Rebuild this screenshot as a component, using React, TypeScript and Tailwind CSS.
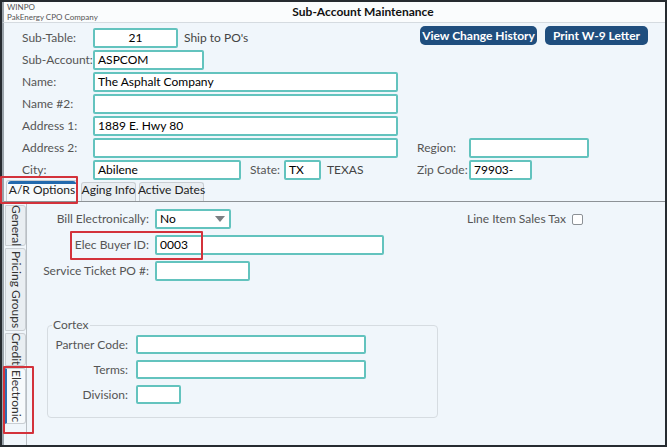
import React from 'react';

const font = "font-['Lato','Noto_Sans',sans-serif]";

const Box = ({ w, value, center, h = 'h-[20px]' }: { w: string; value?: string; center?: boolean; h?: string }) => (
  <div
    className={`${w} ${h} shrink-0 bg-white border-2 border-[#63c3be] rounded-[2px] flex items-center px-[3px] text-[12px] text-black whitespace-nowrap ${center ? 'justify-center' : ''}`}
  >
    {value}
  </div>
);

const Label = ({ children, w = 'w-[71px]' }: { children: React.ReactNode; w?: string }) => (
  <div className={`${w} shrink-0 whitespace-nowrap text-[12px] text-[#555]`}>{children}</div>
);

const TopRow = ({ label, children }: { label: string; children: React.ReactNode }) => (
  <div className="flex items-center h-[20px] mb-[2px]">
    <Label>{label}</Label>
    {children}
  </div>
);

const VTab = ({ label, h, active }: { label: string; h: string; active?: boolean }) => (
  <div
    className={`${h} w-[21px] mb-[2px] flex items-center justify-center border border-[#c9ced3] rounded-r-[3px] text-[12px] text-[#333] ${
      active ? 'bg-[#f7fafc] border-l-2 border-l-[#2b6cb0]' : 'bg-[#e9eef2]'
    }`}
  >
    <span className="[writing-mode:vertical-rl] whitespace-nowrap">{label}</span>
  </div>
);

const HTab = ({ label, w, active }: { label: string; w: string; active?: boolean }) => (
  <div
    className={`${w} relative shrink-0 border border-[#c9ced3] border-b-0 rounded-t-[3px] flex items-end justify-center pb-[2px] whitespace-nowrap text-[12px] text-[#222] ${
      active ? 'h-[21px] bg-[#f7fafc]' : 'h-[19px] bg-[#e9eef2]'
    }`}
  >
    {active && <div className="absolute top-0 left-[1px] right-[1px] h-[3px] bg-[#2369ad] rounded-t-[3px]" />}
    {label}
  </div>
);

export default function App() {
  return (
    <div className={`relative w-[667px] h-[447px] ${font}`}>
      <div className="w-full h-full border-2 border-[#262b30] bg-[#f0f6fb] flex flex-col overflow-hidden">
        {/* header */}
        <div className="h-[21px] shrink-0 flex items-center bg-[#fafcfd] border-b border-[#d5dbe0] border-l-2 border-l-[#9aa3aa]">
          <div className="w-[57px] shrink-0 whitespace-nowrap pl-[3px] text-[8px] leading-[10px] text-[#555]">
            <div>WINPO</div>
            <div>PakEnergy CPO Company</div>
          </div>
          <div className="flex-1 -mt-[1px] text-center text-[12px] font-bold text-[#111] whitespace-nowrap">Sub-Account Maintenance</div>
        </div>

        <div className="flex-1 flex flex-col border-l-2 border-l-[#9aa3aa]">
          {/* header fields */}
          <div className="pl-[18px] pt-[5px] pr-[17px]">
            <TopRow label="Sub-Table:">
              <Box w="w-[85px]" value="21" center />
              <span className="ml-[6px] whitespace-nowrap text-[12px] text-[#444]">Ship to PO's</span>
              <div className="ml-auto self-start -mt-[2px] flex gap-[8px]">
                <button className="h-[19px] w-[117px] whitespace-nowrap rounded-[5px] bg-[#1f4e7e] text-white text-[12px] font-bold">View Change History</button>
                <button className="h-[19px] w-[103px] whitespace-nowrap rounded-[5px] bg-[#1f4e7e] text-white text-[12px] font-bold">Print W-9 Letter</button>
              </div>
            </TopRow>
            <TopRow label="Sub-Account:">
              <Box w="w-[111px]" value="ASPCOM" />
            </TopRow>
            <TopRow label="Name:">
              <Box w="w-[305px]" value="The Asphalt Company" />
            </TopRow>
            <TopRow label="Name #2:">
              <Box w="w-[305px]" />
            </TopRow>
            <TopRow label="Address 1:">
              <Box w="w-[305px]" value="1889 E. Hwy 80" />
            </TopRow>
            <TopRow label="Address 2:">
              <Box w="w-[305px]" />
              <div className="ml-[19px]">
                <Label w="w-[52px]">Region:</Label>
              </div>
              <Box w="w-[120px]" />
            </TopRow>
            <div className="flex items-center h-[20px]">
              <Label>City:</Label>
              <Box w="w-[148px]" value="Abilene" />
              <div className="ml-[9px]">
                <Label w="w-[34px]">State:</Label>
              </div>
              <Box w="w-[37px]" value="TX" />
              <span className="ml-[6px] w-[90px] whitespace-nowrap text-[12px] text-[#444]">TEXAS</span>
              <Label w="w-[52px]">Zip Code:</Label>
              <Box w="w-[63px]" value="79903-" />
            </div>
          </div>

          {/* horizontal tabs */}
          <div className="h-[22px] shrink-0 flex items-end pl-[2px] gap-[3px] border-b border-[#8d9296]">
            <HTab label="A/R Options" w="w-[72px]" active />
            <HTab label="Aging Info" w="w-[55px]" />
            <HTab label="Active Dates" w="w-[65px]" />
          </div>

          {/* body */}
          <div className="flex-1 flex">
            <div className="w-[23px] shrink-0 pt-[3px] pl-[1px] border-r border-[#b9bfc4]">
              <VTab label="General" h="h-[41px]" />
              <VTab label="Pricing Groups" h="h-[83px]" />
              <VTab label="Credit" h="h-[33px]" />
              <VTab label="Electronic" h="h-[56px]" active />
            </div>

            <div className="flex-1 pt-[7px]">
              <div className="flex items-center h-[20px] mb-[6px]">
                <div className="w-[122px] text-right whitespace-nowrap text-[12px] text-[#555]">Bill Electronically:</div>
                <div className="ml-[6px] w-[76px] h-[20px] bg-white border-2 border-[#63c3be] rounded-[2px] flex items-center justify-between px-[3px] text-[12px]">
                  No
                  <svg width="10" height="6" viewBox="0 0 10 6" className="mr-[1px]">
                    <path d="M0 0 H10 L5 6 Z" fill="#7b7f83" />
                  </svg>
                </div>
                <div className="ml-auto mr-[82px] flex items-center gap-[6px] whitespace-nowrap text-[12px] text-[#555]">
                  Line Item Sales Tax
                  <div className="w-[11px] h-[11px] bg-white border border-[#8c9196] rounded-[2px]" />
                </div>
              </div>
              <div className="flex items-center h-[20px] mb-[6px]">
                <div className="w-[122px] text-right whitespace-nowrap text-[12px] text-[#555]">Elec Buyer ID:</div>
                <div className="ml-[6px]">
                  <Box w="w-[229px]" value="0003" />
                </div>
              </div>
              <div className="flex items-center h-[20px]">
                <div className="w-[122px] text-right whitespace-nowrap text-[12px] text-[#555]">Service Ticket PO #:</div>
                <div className="ml-[6px]">
                  <Box w="w-[95px]" />
                </div>
              </div>

              <fieldset className="ml-[20px] mt-[37px] w-[391px] h-[100px] border border-[#d6dce1] rounded-[4px]">
                <legend className="ml-[4px] px-[1px] text-[12px] text-[#555] leading-[14px]">Cortex</legend>
                <div className="pt-[3px]">
                  <div className="flex items-center h-[19px] mb-[6px]">
                    <div className="w-[80px] text-right whitespace-nowrap text-[12px] text-[#555]">Partner Code:</div>
                    <div className="ml-[8px]"><Box w="w-[230px]" h="h-[19px]" /></div>
                  </div>
                  <div className="flex items-center h-[19px] mb-[6px]">
                    <div className="w-[80px] text-right whitespace-nowrap text-[12px] text-[#555]">Terms:</div>
                    <div className="ml-[8px]"><Box w="w-[230px]" h="h-[19px]" /></div>
                  </div>
                  <div className="flex items-center h-[19px]">
                    <div className="w-[80px] text-right whitespace-nowrap text-[12px] text-[#555]">Division:</div>
                    <div className="ml-[8px]"><Box w="w-[45px]" h="h-[19px]" /></div>
                  </div>
                </div>
              </fieldset>
            </div>
          </div>
        </div>
      </div>

      {/* red highlight annotations */}
      <div className="absolute left-[0px] top-[176px] w-[78px] h-[28px] border-2 border-[#d3323b] rounded-[1px]" />
      <div className="absolute left-[70px] top-[231px] w-[133px] h-[29px] border-2 border-[#d3323b] rounded-[1px]" />
      <div className="absolute left-[3px] top-[366px] w-[31px] h-[68px] border-2 border-[#d3323b] rounded-[1px]" />
    </div>
  );
}
